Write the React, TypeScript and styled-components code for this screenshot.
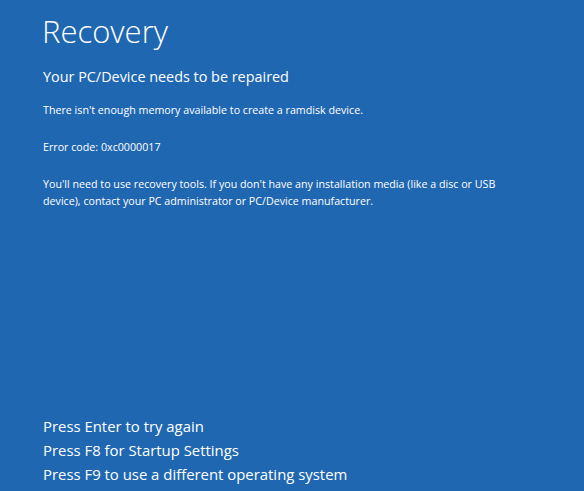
import React from "react";
import styled, { createGlobalStyle } from "styled-components";

const Global = createGlobalStyle`
  html, body { margin: 0; padding: 0; background: #2067b2; }
  #root { height: 100vh; }
`;

const Screen = styled.div`
  box-sizing: border-box;
  height: 100vh;
  background: #2067b2;
  color: #ffffff;
  font-family: "Open Sans", "Noto Sans", sans-serif;
  display: flex;
  flex-direction: column;
  padding: 0 0 0 42px;
`;

const Title = styled.h1`
  margin: 11px 0 0 0;
  font-size: 31px;
  font-weight: 300;
  line-height: 40px;
  letter-spacing: 0;
`;

const Subtitle = styled.h2`
  margin: 16px 0 0 1px;
  font-size: 14.4px;
  font-weight: 400;
  line-height: 20px;
`;

const Para = styled.p<{ $top: number }>`
  margin: ${(p) => p.$top}px 0 0 1px;
  font-size: 10.7px;
  line-height: 17px;
  max-width: 470px;
`;

const Options = styled.div`
  margin-top: auto;
  margin-bottom: 5px;
  margin-left: 1px;
  display: flex;
  flex-direction: column;
`;

const Option = styled.div`
  font-size: 14.9px;
  line-height: 24px;
`;

export default function App() {
  return (
    <>
      <Global />
      <Screen>
        <Title>Recovery</Title>
        <Subtitle>Your PC/Device needs to be repaired</Subtitle>
        <Para $top={15}>There isn't enough memory available to create a ramdisk device.</Para>
        <Para $top={20}>Error code: 0xc0000017</Para>
        <Para $top={20}>
          You'll need to use recovery tools. If you don't have any installation media (like a disc or USB
          device), contact your PC administrator or PC/Device manufacturer.
        </Para>
        <Options>
          <Option>Press Enter to try again</Option>
          <Option>Press F8 for Startup Settings</Option>
          <Option>Press F9 to use a different operating system</Option>
        </Options>
      </Screen>
    </>
  );
}
